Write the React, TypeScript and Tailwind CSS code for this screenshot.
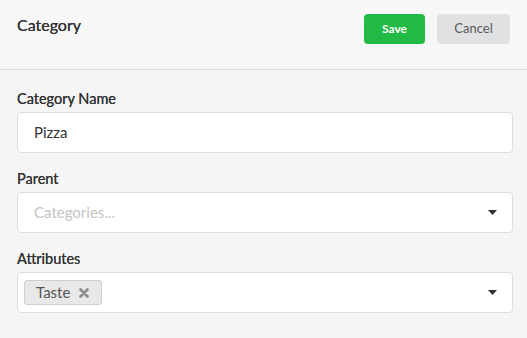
const Caret = () => (
  <svg width="9" height="5" viewBox="0 0 9 5" className="shrink-0">
    <path d="M0 0 L9 0 L4.5 5 Z" fill="#333" />
  </svg>
);

const Label = ({ children }: { children: string }) => (
  <div className="text-[14.5px] leading-5 text-[#333] mb-[3px] [text-shadow:0_0_0.4px_#333]">{children}</div>
);

const App = () => {
  return (
    <div
      className="w-[527px] h-[338px] bg-[#f5f5f5] overflow-hidden"
      style={{ fontFamily: "Lato, 'Open Sans', sans-serif" }}
    >
      <div className="h-[70px] bg-[#f7f7f7] border-b border-[#dcdcdc] px-[17px] pt-[14px] flex items-start justify-between">
        <h1 className="text-[16px] leading-5 text-[#333] mt-[1px] [text-shadow:0_0_0.4px_#333]">Category</h1>
        <div className="flex gap-[12px]">
          <button className="w-[61px] h-[30px] rounded-[4px] bg-[#21ba45] text-white text-[12px] font-bold">
            Save
          </button>
          <button className="w-[73px] h-[30px] rounded-[4px] bg-[#e0e1e2] text-[#5a5a5a] text-[13px]">
            Cancel
          </button>
        </div>
      </div>

      <div className="pl-[17px] pr-[14px] pt-[19px] flex flex-col gap-4">
        <div>
          <Label>Category Name</Label>
          <div className="h-[41px] bg-white border border-[#dedede] rounded-[4px] px-4 flex items-center text-[15px] text-[#333]">
            Pizza
          </div>
        </div>

        <div>
          <Label>Parent</Label>
          <div className="h-[41px] bg-white border border-[#dedede] rounded-[4px] pl-4 pr-[15px] flex items-center justify-between">
            <span className="text-[15px] text-[#c4c4c4]">Categories...</span>
            <Caret />
          </div>
        </div>

        <div>
          <Label>Attributes</Label>
          <div className="h-[41px] bg-white border border-[#dedede] rounded-[4px] pl-[6px] pr-[15px] flex items-center justify-between">
            <span className="h-[25px] pl-[11px] pr-[12px] bg-[#e8e8e8] border border-[#cfcfcf] rounded-[3px] flex items-center gap-[9px] text-[15px] text-[#555]">
              Taste
              <svg width="10" height="10" viewBox="0 0 10 10">
                <path d="M1.5 1.5 L8.5 8.5 M8.5 1.5 L1.5 8.5" stroke="#8c8c8c" strokeWidth="2.6" strokeLinecap="round" />
              </svg>
            </span>
            <Caret />
          </div>
        </div>
      </div>
    </div>
  );
};

export default App;
